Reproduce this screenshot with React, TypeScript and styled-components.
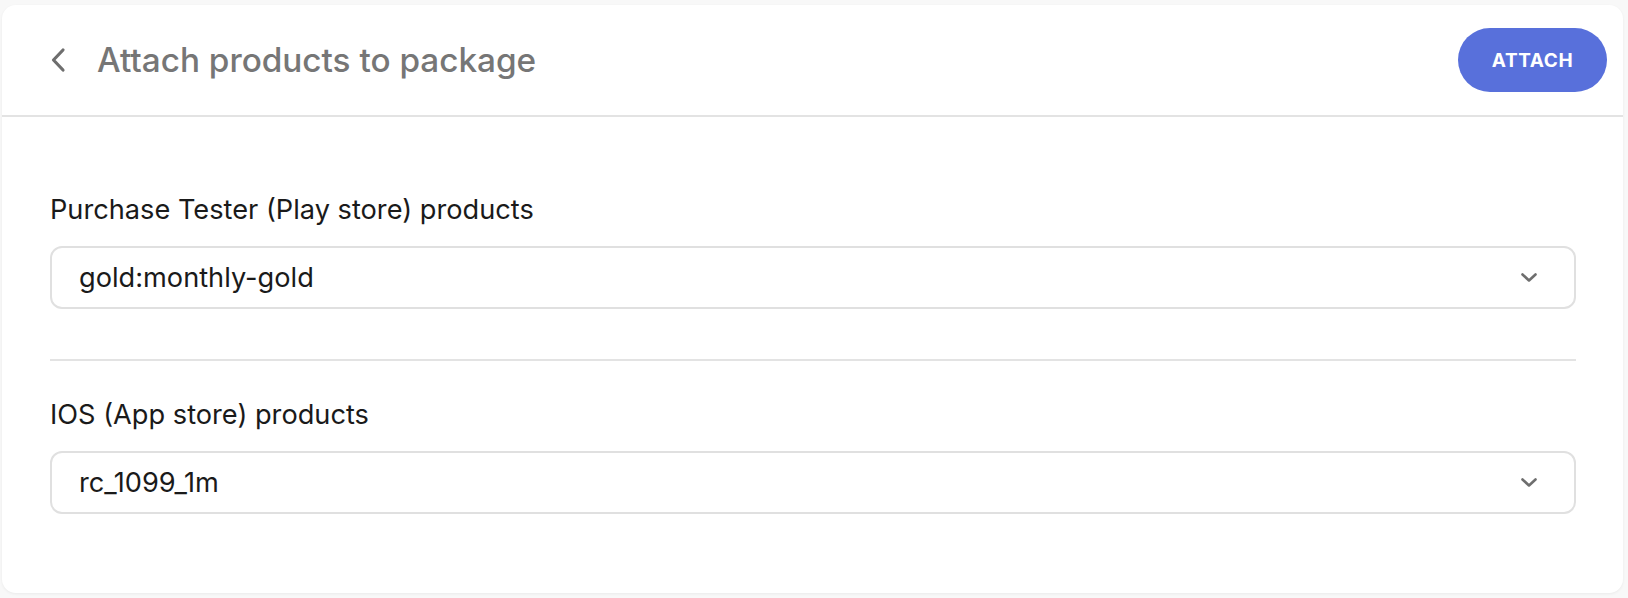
import React from "react";
import styled, { createGlobalStyle } from "styled-components";

const GlobalStyle = createGlobalStyle`
  *, *::before, *::after {
    box-sizing: border-box;
  }
  html, body {
    margin: 0;
    padding: 0;
    background: #f8f8f8;
    font-family: Inter, "Noto Sans", Arial, sans-serif;
  }
`;

const Page = styled.div`
  padding: 5px 5px 6px 2px;
`;

const Card = styled.div`
  background: #ffffff;
  border-radius: 14px;
  box-shadow: 0 1px 3px rgba(0, 0, 0, 0.06);
  overflow: hidden;
`;

const Header = styled.div`
  height: 112px;
  display: flex;
  align-items: center;
  justify-content: space-between;
  padding: 0 16px 0 47px;
  border-bottom: 2px solid #e3e3e3;
`;

const TitleGroup = styled.div`
  display: flex;
  align-items: center;
  gap: 30px;
`;

const BackButton = styled.button`
  border: none;
  background: none;
  padding: 0;
  display: flex;
  align-items: center;
  color: #6e6e6e;
  cursor: pointer;
`;

const Title = styled.h1`
  margin: 0;
  font-size: 33.3px;
  font-weight: 500;
  color: #767676;
`;

const AttachButton = styled.button`
  height: 64px;
  width: 149px;
  border: none;
  border-radius: 32px;
  background: #5870db;
  color: #ffffff;
  font-family: Inter, Arial, sans-serif;
  font-size: 19px;
  font-weight: 700;
  letter-spacing: 0.6px;
  cursor: pointer;
`;

const Body = styled.div`
  padding: 75px 47px 79px 48px;
  display: flex;
  flex-direction: column;
`;

const Field = styled.div`
  display: flex;
  flex-direction: column;
  gap: 18px;
`;

const Label = styled.label`
  font-size: 27.2px;
  color: #1a1a1a;
  line-height: 36px;
`;

const Select = styled.div`
  height: 63px;
  border: 2px solid #e0e0e0;
  border-radius: 12px;
  display: flex;
  align-items: center;
  justify-content: space-between;
  padding: 0 36px 0 27px;
  font-size: 27.2px;
  color: #1a1a1a;
`;

const Divider = styled.hr`
  border: none;
  border-top: 2px solid #e3e3e3;
  margin: 50px 0 36px;
`;

const Chevron = ({ dir }: { dir: "left" | "down" }) =>
  dir === "left" ? (
    <svg width="18" height="26" viewBox="0 0 18 26" fill="none">
      <path
        d="M14 3 L4.5 13 L14 23"
        stroke="currentColor"
        strokeWidth="3.2"
        strokeLinecap="round"
        strokeLinejoin="round"
      />
    </svg>
  ) : (
    <svg width="18" height="11" viewBox="0 0 18 11" fill="none">
      <path
        d="M2.5 2.5 L9 8.5 L15.5 2.5"
        stroke="#6e6e6e"
        strokeWidth="2.6"
        strokeLinecap="round"
        strokeLinejoin="round"
      />
    </svg>
  );

const fields = [
  { label: "Purchase Tester (Play store) products", value: "gold:monthly-gold" },
  { label: "IOS (App store) products", value: "rc_1099_1m" },
];

export default function App() {
  return (
    <Page>
      <GlobalStyle />
      <Card>
        <Header>
          <TitleGroup>
            <BackButton>
              <Chevron dir="left" />
            </BackButton>
            <Title>Attach products to package</Title>
          </TitleGroup>
          <AttachButton>ATTACH</AttachButton>
        </Header>
        <Body>
          {fields.map((f, i) => (
            <React.Fragment key={f.label}>
              {i > 0 && <Divider />}
              <Field>
                <Label>{f.label}</Label>
                <Select>
                  <span>{f.value}</span>
                  <Chevron dir="down" />
                </Select>
              </Field>
            </React.Fragment>
          ))}
        </Body>
      </Card>
    </Page>
  );
}
